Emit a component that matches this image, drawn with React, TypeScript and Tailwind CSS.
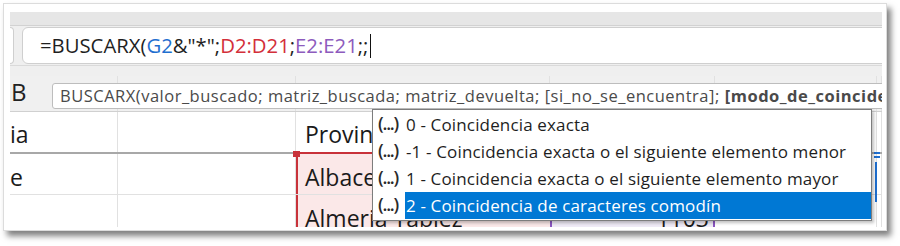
import React from "react";

const F = "font-['Open_Sans','Noto_Sans',sans-serif]";

function Cell({
  children,
  className = "",
}: {
  children?: React.ReactNode;
  className?: string;
}) {
  return (
    <div
      className={`flex items-end overflow-hidden whitespace-nowrap border-r border-[#e1e1e1] ${className}`}
    >
      {children}
    </div>
  );
}

const cols = "grid grid-cols-[108px_178px_254px_165px_162px_1fr]";

const items = [
  "0 - Coincidencia exacta",
  "-1 - Coincidencia exacta o el siguiente elemento menor",
  "1 - Coincidencia exacta o el siguiente elemento mayor",
  "2 - Coincidencia de caracteres comodín",
];

export default function App() {
  return (
    <div className={`w-[900px] h-[246px] bg-white ${F}`}>
      <div className="ml-[3px] mt-[3px] w-[884px] h-[228px] bg-white border border-[#dcdcdc] shadow-[4px_5px_6px_rgba(0,0,0,0.5)] pl-[6px] pt-[8px] pr-[4px] pb-[3px]">
        <div className="relative w-[872px] h-[215px] overflow-hidden flex flex-col bg-[#f0f0f0]">
          {/* top band */}
          <div className="h-[14px] shrink-0 bg-[#e6e6e6] border-b border-[#d2d2d2]" />
          {/* formula row */}
          <div className="h-[39px] shrink-0 flex items-center gap-[8px] bg-[#efefef]">
            <div className="w-[4px] h-[37px] bg-white border border-l-0 border-[#cfcfcf] rounded-r-[6px]" />
            <div className="flex-1 -mr-[20px] h-[37px] bg-white border border-[#cfcfcf] rounded-[6px] flex items-center pl-[17px] text-[20.3px] text-[#1f1f1f] whitespace-nowrap">
              <span>=BUSCARX(</span>
              <span className="text-[#1f6fcf]">G2</span>
              <span>&amp;"*";</span>
              <span className="text-[#d32f3a]">D2:D21</span>
              <span>;</span>
              <span className="text-[#8d5bbd]">E2:E21</span>
              <span>;;</span>
              <span className="ml-[2px] w-[1px] h-[24px] bg-[#111]" />
            </div>
          </div>
          {/* band between */}
          <div className="h-[11px] shrink-0 bg-[#efefef] border-t border-[#dadada]" />
          {/* header row */}
          <div className={`${cols} h-[36px] shrink-0 bg-[#f0f0f0] border-b border-[#d0d0d0]`}>
            <Cell className="border-[#d6d6d6] text-[24px] leading-none text-[#222] pb-[7px] pl-[1px]">B</Cell>
            <Cell className="border-[#d6d6d6]" />
            <Cell className="border-[#d6d6d6]" />
            <Cell className="border-[#d6d6d6]" />
            <Cell className="border-[#d6d6d6]" />
            <Cell className="border-0" />
          </div>
          {/* row 1 */}
          <div className={`${cols} h-[42px] shrink-0 bg-white border-b-2 border-[#a8a8a8] text-[23px] text-[#1a1a1a] leading-none`}>
            <Cell className="pb-[6px]">ia</Cell>
            <Cell />
            <Cell className="pl-[9px] pb-[6px]">Provincia</Cell>
            <Cell />
            <Cell />
            <Cell className="border-0" />
          </div>
          {/* row 2 */}
          <div className={`${cols} h-[41px] shrink-0 bg-white border-b border-[#e1e1e1] text-[23px] text-[#1a1a1a] leading-none`}>
            <Cell className="pb-[5px]">e</Cell>
            <Cell />
            <Cell className="bg-[#fbe8e8] border-l-2 border-l-[#c8323a] border-r-0 -mt-[2px] border-t-2 border-t-[#c8323a] pl-[7px] pb-[5px]">
              Albacete
            </Cell>
            <Cell className="bg-[#efeaf6] border-l-2 border-l-[#8a55c0] border-r-2 border-r-[#8a55c0]" />
            <Cell />
            <Cell className="border-0" />
          </div>
          {/* row 3 */}
          <div className={`${cols} h-[41px] shrink-0 bg-white text-[23px] text-[#1a1a1a] leading-none`}>
            <Cell className="pb-[6px]" />
            <Cell />
            <Cell className="bg-[#fbe8e8] border-l-2 border-l-[#c8323a] border-r-0 pl-[7px] pb-[6px]">
              Almeria Tablez
            </Cell>
            <Cell className="bg-[#efeaf6] border-l-2 border-l-[#8a55c0] border-r-2 border-r-[#8a55c0] justify-end pr-[4px] pb-[6px]">
              1103
            </Cell>
            <Cell />
            <Cell className="border-0" />
          </div>

          {/* red range handle */}
          <div className="absolute left-[283px] top-[139px] w-[7px] h-[6px] bg-[#c8323a]" />
          {/* blue reference marks */}
          <div className="absolute left-[864px] top-[140px] w-[6px] h-[2px] bg-[#1f6fcf]" />
          <div className="absolute left-[864px] top-[144px] w-[6px] h-[2px] bg-[#1f6fcf]" />
          <div className="absolute left-[865px] top-[150px] w-[2px] h-[40px] bg-[#1f6fcf]" />

          {/* tooltip */}
          <div className="absolute left-[42px] top-[71px] -right-[30px] h-[26px] bg-white border border-[#bdbdbd] rounded-[3px] flex items-center pl-[7px] text-[16.5px] tracking-[0.5px] text-[#4a4a4a] whitespace-nowrap">
            BUSCARX(valor_buscado; matriz_buscada; matriz_devuelta; [si_no_se_encuentra];{" "}
            <span className="font-bold ml-[5px]">[modo_de_coincidencia]</span>
          </div>

          {/* dropdown */}
          <div className="absolute left-[362px] top-[97px] w-[500px] bg-white border border-[#7d7d7d] shadow-[2px_2px_3px_rgba(0,0,0,0.25)] flex flex-col py-[1px] text-[17px] tracking-[0.15px] text-[#1e1e1e]">
            {items.map((t, i) => (
              <div key={i} className="flex items-stretch h-[27px]">
                <div className="w-[32px] shrink-0 flex items-center justify-center text-[18px] font-semibold text-[#2a2a2a] tracking-[-1.2px] pr-[2px] -mt-[2px]">
                  (...)
                </div>
                <div
                  className={`flex-1 flex items-center pl-[1px] whitespace-nowrap ${
                    i === 3 ? "bg-[#0078d4] text-white" : ""
                  }`}
                >
                  {t}
                </div>
              </div>
            ))}
          </div>
        </div>
      </div>
    </div>
  );
}
